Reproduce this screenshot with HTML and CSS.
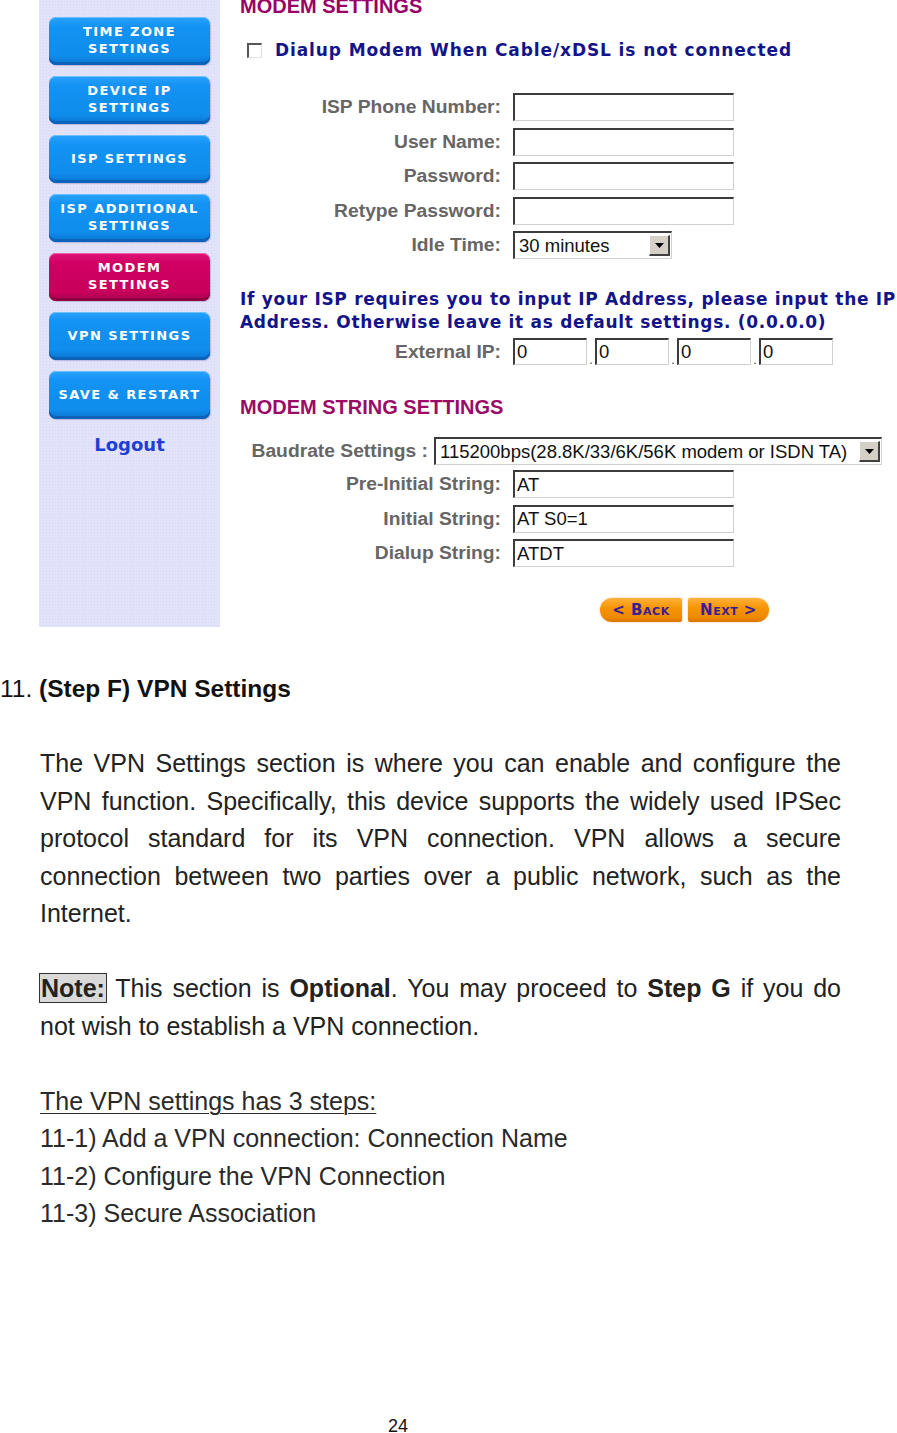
FILE: index.html
```html
<!DOCTYPE html>
<html>
<head>
<meta charset="utf-8">
<link rel="stylesheet" href="styles.css">
</head>
<body>
<div class="top">
  <nav class="sidebar">
    <div class="navbtn">TIME ZONE<br>SETTINGS</div>
    <div class="navbtn">DEVICE IP<br>SETTINGS</div>
    <div class="navbtn">ISP SETTINGS</div>
    <div class="navbtn">ISP ADDITIONAL<br>SETTINGS</div>
    <div class="navbtn active">MODEM<br>SETTINGS</div>
    <div class="navbtn">VPN SETTINGS</div>
    <div class="navbtn">SAVE &amp; RESTART</div>
    <div class="logout">Logout</div>
  </nav>
  <main class="main">
    <div class="sec-title first">MODEM SETTINGS</div>
    <div class="check-row"><span class="checkbox"></span><span class="check-label">Dialup Modem When Cable/xDSL is not connected</span></div>
    <div class="form-grid">
      <div class="label">ISP Phone Number:</div><div class="input"></div>
      <div class="label">User Name:</div><div class="input"></div>
      <div class="label">Password:</div><div class="input"></div>
      <div class="label">Retype Password:</div><div class="input"></div>
      <div class="label">Idle Time:</div><div class="select idle"><span class="select-text">30 minutes</span><span class="arrow"><svg width="9" height="5" viewBox="0 0 9 5"><path d="M0 0H9L4.5 5Z" fill="#000"/></svg></span></div>
    </div>
    <div class="info">If your ISP requires you to input IP Address, please input the IP<br>Address. Otherwise leave it as default settings. (0.0.0.0)</div>
    <div class="ip-row">
      <div class="label">External IP:</div>
      <div class="ip-fields">
        <div class="input ip"><span class="val">0</span></div><span class="dot">.</span>
        <div class="input ip"><span class="val">0</span></div><span class="dot">.</span>
        <div class="input ip"><span class="val">0</span></div><span class="dot">.</span>
        <div class="input ip"><span class="val">0</span></div>
      </div>
    </div>
    <div class="sec-title second">MODEM STRING SETTINGS</div>
    <div class="baud-row">
      <div class="label">Baudrate Settings :</div>
      <div class="select baud"><span class="select-text">115200bps(28.8K/33/6K/56K modem or ISDN TA)</span><span class="arrow"><svg width="9" height="5" viewBox="0 0 9 5"><path d="M0 0H9L4.5 5Z" fill="#000"/></svg></span></div>
    </div>
    <div class="form-grid strings">
      <div class="label">Pre-Initial String:</div><div class="input"><span class="val">AT</span></div>
      <div class="label">Initial String:</div><div class="input"><span class="val">AT S0=1</span></div>
      <div class="label">Dialup String:</div><div class="input"><span class="val">ATDT</span></div>
    </div>
    <div class="nav-buttons">
      <div class="obtn back">&lt; Back</div>
      <div class="obtn next">Next &gt;</div>
    </div>
  </main>
</div>

<section class="doc">
  <h2 class="step-heading">11. <b>(Step F) VPN Settings</b></h2>
  <p class="just">The VPN Settings section is where you can enable and configure the VPN function. Specifically, this device supports the widely used IPSec protocol standard for its VPN connection. VPN allows a secure connection between two parties over a public network, such as the Internet.</p>
  <p class="just"><span class="note">Note:</span> This section is <b>Optional</b>. You may proceed to <b>Step G</b> if you do not wish to establish a VPN connection.</p>
  <div class="steps">
    <div class="u">The VPN settings has 3 steps:</div>
    <div>11-1) Add a VPN connection: Connection Name</div>
    <div>11-2) Configure the VPN Connection</div>
    <div>11-3) Secure Association</div>
  </div>
  <div class="page-num">24</div>
</section>
</body>
</html>
```

FILE: styles.css
```css
html, body {
  margin: 0;
  padding: 0;
  background: #fff;
}
body {
  width: 897px;
  height: 1433px;
  overflow: hidden;
  font-family: "Liberation Sans", Arial, sans-serif;
}

.top {
  display: flex;
  height: 627px;
  padding-left: 39px;
}

.sidebar {
  width: 181px;
  height: 627px;
  background-color: #e3e2fb;
  background-image: radial-gradient(#d9d8f4 0.6px, transparent 0.8px);
  background-size: 3px 3px;
  display: flex;
  flex-direction: column;
  align-items: center;
  padding-top: 17px;
  gap: 11px;
  box-sizing: border-box;
}

.navbtn {
  width: 161px;
  height: 48px;
  box-sizing: border-box;
  border-radius: 7px;
  background: linear-gradient(#2aa2ff 0%, #1393f3 20%, #0f8cec 80%, #0a74cf 100%);
  box-shadow: inset 0 -3px 0 #0b62b8, inset 0 1px 0 #6cc2ff, 1px 1px 1px #b9b8dc;
  color: #fff;
  font-family: "DejaVu Sans", Verdana, sans-serif;
  font-weight: bold;
  font-size: 13px;
  letter-spacing: 1.4px;
  line-height: 17px;
  text-align: center;
  display: flex;
  align-items: center;
  justify-content: center;
  padding-bottom: 2px;
  white-space: nowrap;
}
.navbtn.active {
  background: linear-gradient(#e0157a 0%, #cf0062 20%, #c8005c 80%, #a8004c 100%);
  box-shadow: inset 0 -3px 0 #8e0040, inset 0 1px 0 #f060a0, 1px 1px 1px #b9b8dc;
}

.logout {
  margin-top: 4px;
  color: #1e3fd4;
  font-family: "DejaVu Sans", Verdana, sans-serif;
  font-weight: bold;
  font-size: 18px;
  line-height: 22px;
}

.main {
  margin-left: 20px;
  width: 657px;
}

.sec-title {
  color: #990066;
  font-weight: bold;
  font-size: 20px;
  line-height: 20px;
  height: 20px;
  white-space: nowrap;
}
.sec-title.first {
  margin-top: -4px;
}
.sec-title.second {
  margin-top: 32px;
  color: #9a0a66;
}

.check-row {
  margin-top: 24px;
  height: 20px;
  display: flex;
  align-items: center;
  padding-left: 7px;
}
.checkbox {
  width: 15px;
  height: 15px;
  box-sizing: border-box;
  border-top: 2px solid #555;
  border-left: 2px solid #555;
  border-bottom: 1px solid #e0e0e0;
  border-right: 1px solid #e0e0e0;
  background: #fff;
  margin-right: 13px;
}
.check-label {
  color: #14148a;
  font-family: "DejaVu Sans", Verdana, sans-serif;
  font-weight: bold;
  font-size: 17px;
  letter-spacing: 0.9px;
  white-space: nowrap;
}

.label {
  color: #666;
  font-weight: bold;
  font-size: 19.25px;
  text-align: right;
  white-space: nowrap;
  align-self: center;
}

.form-grid {
  margin-top: 33px;
  display: grid;
  grid-template-columns: 261px 221px;
  column-gap: 12px;
  row-gap: 6.5px;
  grid-auto-rows: 28px;
}
.form-grid.strings {
  margin-top: 5px;
}

.input {
  box-sizing: border-box;
  height: 28px;
  background: #fff;
  border-top: 2px solid #3c3c3c;
  border-left: 2px solid #3c3c3c;
  border-right: 1px solid #d0d0d0;
  border-bottom: 1px solid #d0d0d0;
  display: flex;
  align-items: center;
}
.val, .select-text {
  font-size: 18.5px;
  color: #111;
  padding-left: 2px;
  white-space: nowrap;
}

.select {
  box-sizing: border-box;
  height: 28px;
  background: #fff;
  border-top: 2px solid #3c3c3c;
  border-left: 2px solid #3c3c3c;
  border-right: 1px solid #d0d0d0;
  border-bottom: 1px solid #d0d0d0;
  display: flex;
  align-items: center;
  justify-content: space-between;
  padding-right: 1px;
}
.select.idle {
  width: 159px;
}
.select.idle .select-text {
  padding-left: 4px;
}
.select.baud {
  width: 448px;
}
.select.baud .select-text {
  padding-left: 4px;
}
.arrow {
  width: 21px;
  height: 21px;
  box-sizing: border-box;
  background: #d4d0c8;
  border-top: 1px solid #fff;
  border-left: 1px solid #fff;
  border-right: 2px solid #404040;
  border-bottom: 2px solid #404040;
  display: flex;
  align-items: center;
  justify-content: center;
}

.info {
  margin-top: 28.5px;
  color: #14148a;
  font-family: "DejaVu Sans", Verdana, sans-serif;
  font-weight: bold;
  font-size: 17px;
  letter-spacing: 0.7px;
  line-height: 23px;
  white-space: nowrap;
}

.ip-row {
  margin-top: 4.5px;
  display: grid;
  grid-template-columns: 261px auto;
  column-gap: 12px;
  height: 27px;
}
.ip-fields {
  display: flex;
  align-items: flex-end;
}
.input.ip {
  width: 74px;
  height: 27px;
}
.dot {
  width: 8px;
  font-size: 12px;
  line-height: 10px;
  color: #333;
  text-align: center;
}

.baud-row {
  margin-top: 20px;
  display: grid;
  grid-template-columns: 188px 448px;
  column-gap: 6px;
  height: 28px;
}

.nav-buttons {
  margin-top: 31px;
  margin-left: 360px;
  display: flex;
  gap: 6px;
}
.obtn {
  height: 24px;
  box-sizing: border-box;
  background: linear-gradient(#ffb13a 0%, #f59300 45%, #ef8a00 80%, #d97400 100%);
  color: #3b1e96;
  font-family: "DejaVu Sans", Verdana, sans-serif;
  font-weight: bold;
  font-size: 15px;
  font-variant: small-caps;
  letter-spacing: 0.5px;
  display: flex;
  align-items: center;
  justify-content: center;
  box-shadow: 0 0 2px #f5b860;
}
.obtn.back {
  width: 82px;
  border-radius: 12px 2px 2px 12px;
}
.obtn.next {
  width: 81px;
  border-radius: 2px 12px 12px 2px;
}

.doc {
  padding: 0 56px 0 40px;
  font-size: 25px;
  line-height: 37.5px;
  color: #222;
}
.step-heading {
  margin: 43.25px 0 0 -40px;
  font-size: 24.5px;
  font-weight: normal;
  line-height: 37.5px;
  color: #111;
}
.step-heading b {
  font-weight: bold;
}
.just {
  margin: 37.5px 0 0 0;
  text-align: justify;
}
.note {
  font-weight: bold;
  background: #d9d9d9;
  outline: 1px solid #333;
  padding: 0 1px;
}
.steps {
  margin-top: 37.5px;
  color: #2a2a2a;
}
.u {
  text-decoration: underline;
  text-underline-offset: 3px;
  text-decoration-thickness: 1px;
}
.page-num {
  margin: 182px 0 0 -40px;
  padding-left: 388px;
  font-size: 18px;
  line-height: 22px;
  color: #111;
}
```
